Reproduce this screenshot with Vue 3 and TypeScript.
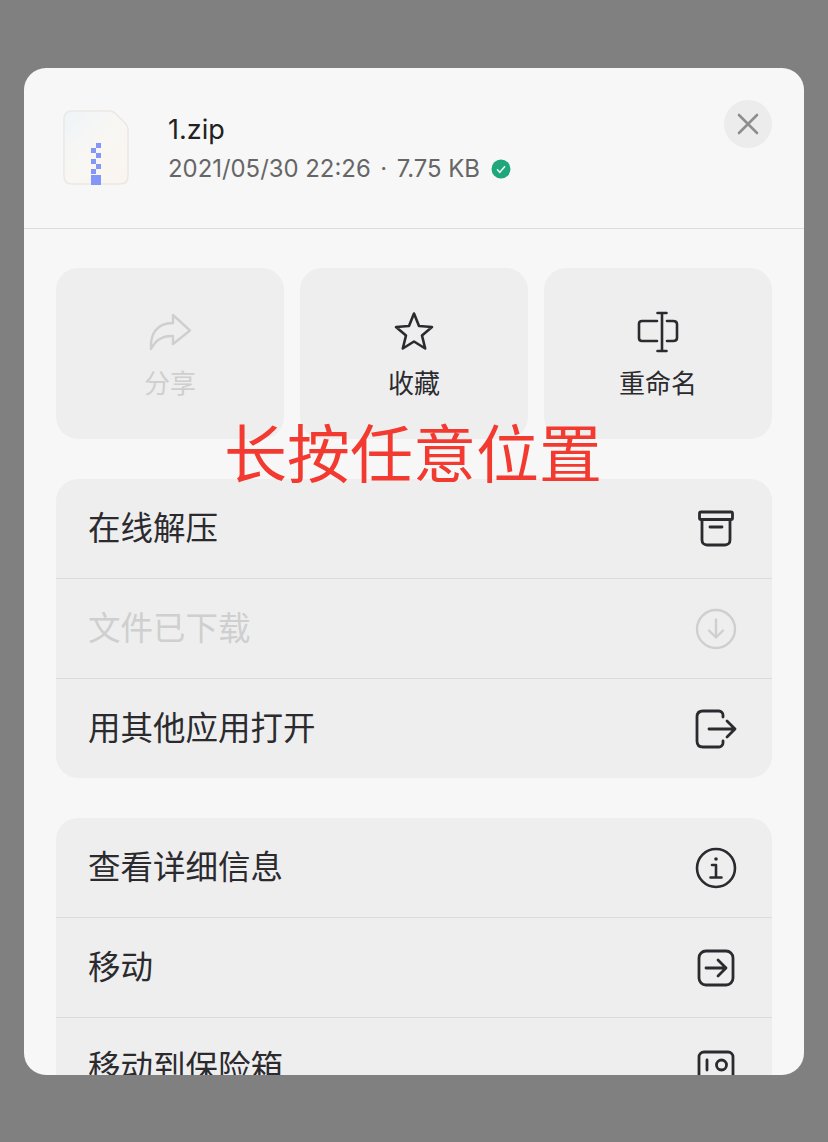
<template>
  <div class="backdrop">
    <div class="sheet">
      <header class="head">
        <svg class="file-icon" width="66" height="76" viewBox="0 0 66 76">
          <defs>
            <linearGradient id="fileBg" x1="0" y1="0" x2="1" y2="1">
              <stop offset="0" stop-color="#eff4f8" />
              <stop offset="0.55" stop-color="#f9f7f3" />
              <stop offset="1" stop-color="#faf4ee" />
            </linearGradient>
          </defs>
          <path
            d="M9 1h37c3 0 5 1 7 3l9 9c2 2 3 4 3 7v46c0 5-3 8-8 8H9c-5 0-8-3-8-8V9c0-5 3-8 8-8z"
            fill="url(#fileBg)"
            stroke="#ebe8e4"
            stroke-width="1.5"
          />
          <rect v-for="b in zipBlocks" :key="b.y" :x="b.x" :y="b.y" width="5" height="5" fill="#8497f6" />
          <rect x="28" y="65" width="10" height="10" fill="#8497f6" />
        </svg>
        <div class="head-text">
          <div class="file-name">1.zip</div>
          <div class="file-meta">
            <span>2021/05/30 22:26</span>
            <span class="dot">·</span>
            <span>7.75 KB</span>
            <svg class="check" width="20" height="20" viewBox="0 0 20 20">
              <circle cx="10" cy="10" r="9.5" fill="#1fa67a" />
              <path d="M6 10.3l2.8 3L14 7.2" fill="none" stroke="#e6f5ef" stroke-width="1.6" />
            </svg>
          </div>
        </div>
        <button class="close" type="button" aria-label="关闭">
          <svg width="24" height="24" viewBox="0 0 24 24">
            <path d="M3 3l18 18M21 3L3 21" stroke="#8e8e8e" stroke-width="2.6" stroke-linecap="round" />
          </svg>
        </button>
      </header>

      <div class="content">
        <div class="actions">
          <div class="action disabled">
            <svg width="44" height="40" viewBox="0 0 44 40" fill="none" stroke="currentColor" stroke-width="2.4" stroke-linejoin="round" stroke-linecap="round">
              <path d="M25 3l17 15.500L25 32V24C15 23.500 8 27 3 37 2 23 8 11 25 11z" />
            </svg>
            <span>分享</span>
          </div>
          <div class="action">
            <svg width="40" height="40" viewBox="0 0 40 40" fill="none" stroke="currentColor" stroke-width="2.6" stroke-linejoin="round">
              <path d="M20 1.500l5 12.500 13 1-10 8.500 3.200 13L20 29.500 8.800 36.500 12 23.500 2 15l13-1z" />
            </svg>
            <span>收藏</span>
          </div>
          <div class="action">
            <svg width="42" height="42" viewBox="0 0 42 42" fill="none" stroke="currentColor" stroke-width="2.600" stroke-linecap="round" stroke-linejoin="round">
              <path d="M20 10H5c-2 0-3 1-3 3v14c0 2 1 3 3 3h15M30 10h6c2 0 4 1 4 3v14c0 2-2 3-4 3h-6" />
              <path d="M25 2v38M20.500 2h9M20.500 40h9" />
            </svg>
            <span>重命名</span>
          </div>
        </div>

        <div class="group">
          <div class="row">
            <span>在线解压</span>
            <svg class="row-icon" width="42" height="42" viewBox="0 0 42 42" fill="none" stroke="currentColor" stroke-width="2.800" stroke-linecap="round" stroke-linejoin="round">
              <rect x="4.500" y="4" width="33" height="7.500" rx="1.500" />
              <path d="M7 11.500V32c0 3 2 5 5 5h18c3 0 5-2 5-5V11.500M15 19h12" />
            </svg>
          </div>
          <div class="row disabled">
            <span>文件已下载</span>
            <svg class="row-icon" width="42" height="42" viewBox="0 0 42 42" fill="none" stroke="currentColor" stroke-width="2.400" stroke-linecap="round" stroke-linejoin="round">
              <circle cx="21" cy="21" r="19" />
              <path d="M21 11.500V29M14 22.500l7 7 7-7" />
            </svg>
          </div>
          <div class="row">
            <span>用其他应用打开</span>
            <svg class="row-icon" width="42" height="42" viewBox="0 0 42 42" fill="none" stroke="currentColor" stroke-width="2.800" stroke-linecap="round" stroke-linejoin="round">
              <path d="M28 9V7c0-2-2-4-4-4H8C4 3 2 5 2 9v24c0 4 2 6 6 6h16c2 0 4-2 4-4v-2M14 21h26M32 13l8 8-8 8" />
            </svg>
          </div>
        </div>

        <div class="group">
          <div class="row">
            <span>查看详细信息</span>
            <svg class="row-icon" width="42" height="42" viewBox="0 0 42 42" fill="none" stroke="currentColor" stroke-width="2.600" stroke-linecap="round" stroke-linejoin="round">
              <circle cx="21" cy="21" r="19" />
              <circle cx="21" cy="12" r="1.800" fill="currentColor" stroke="none" />
              <path d="M17 18h4v12M15.500 30.500h11" />
            </svg>
          </div>
          <div class="row">
            <span>移动</span>
            <svg class="row-icon" width="42" height="42" viewBox="0 0 42 42" fill="none" stroke="currentColor" stroke-width="2.800" stroke-linecap="round" stroke-linejoin="round">
              <rect x="4" y="4" width="34" height="34" rx="7" />
              <path d="M11 21h20M23 13l8 8-8 8" />
            </svg>
          </div>
          <div class="row">
            <span>移动到保险箱</span>
            <svg class="row-icon safe" width="42" height="42" viewBox="0 0 42 42" fill="none" stroke="currentColor" stroke-width="2.800" stroke-linecap="round">
              <rect x="4" y="4" width="34" height="34" rx="5" />
              <path d="M12 12v10" />
              <circle cx="26.500" cy="17" r="5" />
            </svg>
          </div>
        </div>
      </div>

      <div class="hint">长按任意位置</div>
    </div>
  </div>
</template>

<script setup lang="ts">
interface ZipBlock {
  x: number
  y: number
}

// 拉链方块
const zipBlocks: ZipBlock[] = [
  { x: 33, y: 33 },
  { x: 28, y: 38 },
  { x: 33, y: 43 },
  { x: 28, y: 49 },
  { x: 33, y: 54 },
  { x: 28, y: 59 },
]
</script>

<style>
html,
body {
  margin: 0;
  background: #808080;
}
</style>

<style scoped>
.backdrop {
  box-sizing: border-box;
  width: 828px;
  height: 1142px;
  padding: 68px 24px 67px;
  background: #808080;
  overflow: hidden;
  font-family: "Noto Sans CJK SC", Inter, sans-serif;
}

.sheet {
  position: relative;
  height: 100%;
  border-radius: 22px;
  background: #f7f7f7;
  overflow: hidden;
}

.head {
  box-sizing: border-box;
  display: flex;
  align-items: flex-start;
  height: 161px;
  padding: 32px 32px 0 39px;
  border-bottom: 1px solid #dcdcdc;
}

.file-icon {
  flex: none;
  margin-top: 10px;
}

.head-text {
  flex: 1;
  margin-left: 39px;
  padding-top: 12px;
  font-family: Inter, "Noto Sans CJK SC", sans-serif;
}

.file-name {
  font-size: 27px;
  line-height: 36px;
  color: #222;
}

.file-meta {
  display: flex;
  align-items: center;
  margin-top: 3px;
  font-size: 23.9px;
  line-height: 36px;
  color: #666;
}

.dot {
  width: 26px;
  text-align: center;
}

.check {
  margin-left: 11px;
}

.close {
  display: flex;
  flex: none;
  align-items: center;
  justify-content: center;
  width: 48px;
  height: 48px;
  padding: 0;
  border: 0;
  border-radius: 50%;
  background: #ececec;
}

.content {
  display: flex;
  flex-direction: column;
  gap: 40px;
  padding: 39px 32px 0;
}

.actions {
  display: grid;
  grid-template-columns: repeat(3, 228px);
  gap: 16px;
}

.action {
  display: flex;
  flex-direction: column;
  align-items: center;
  box-sizing: border-box;
  height: 171px;
  padding-top: 43px;
  border-radius: 22px;
  background: #eeeeee;
  color: #2b2b2f;
}

.action svg {
  height: 42px;
}

.action span {
  margin-top: 11px;
  font-size: 26px;
  line-height: 36px;
}

.action.disabled,
.row.disabled {
  color: #cfcfcf;
}

.group {
  border-radius: 22px;
  background: #eeeeee;
  color: #2b2b2f;
}

.row {
  display: flex;
  align-items: center;
  justify-content: space-between;
  box-sizing: border-box;
  height: 100px;
  padding: 0 35px 0 32px;
  border-top: 1px solid #dcdcdc;
  font-size: 32.500px;
}

.row:first-child {
  border-top: 0;
  height: 99px;
}

.row span {
  padding-bottom: 6px;
}

.row-icon {
  flex: none;
}

.row-icon.safe {
  margin-top: 2px;
}

.hint {
  position: absolute;
  top: 346px;
  left: 200px;
  font-size: 63px;
  line-height: 72px;
  color: #f23a30;
  white-space: nowrap;
}
</style>
